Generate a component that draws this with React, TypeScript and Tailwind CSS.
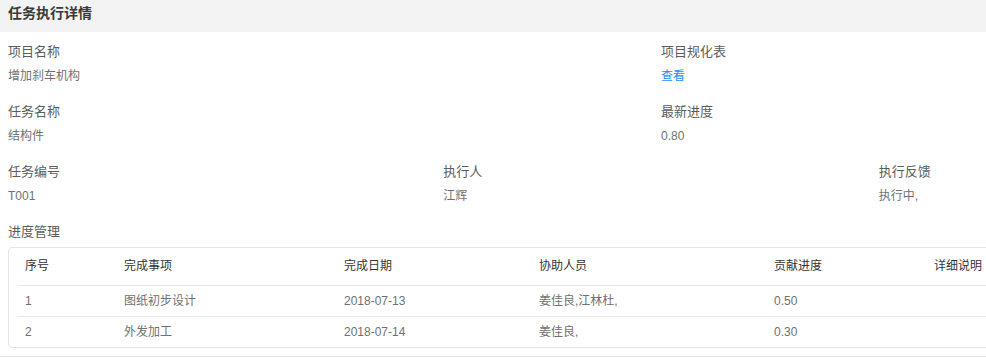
const fieldRows = [
  {
    cols: "grid-cols-2",
    items: [
      { label: "项目名称", value: "增加刹车机构" },
      { label: "项目规化表", value: "查看", link: true },
    ],
  },
  {
    cols: "grid-cols-2",
    items: [
      { label: "任务名称", value: "结构件" },
      { label: "最新进度", value: "0.80" },
    ],
  },
  {
    cols: "grid-cols-3",
    items: [
      { label: "任务编号", value: "T001" },
      { label: "执行人", value: "江辉" },
      { label: "执行反馈", value: "执行中," },
    ],
  },
]

const columns = [
  { title: "序号", w: "w-[99px]" },
  { title: "完成事项", w: "w-[220px]" },
  { title: "完成日期", w: "w-[195px]" },
  { title: "协助人员", w: "w-[235px]" },
  { title: "贡献进度", w: "w-[160px]" },
  { title: "详细说明", w: "" },
]

const records = [
  ["1", "图纸初步设计", "2018-07-13", "姜佳良,江林杜,", "0.50", ""],
  ["2", "外发加工", "2018-07-14", "姜佳良,", "0.30", ""],
]

export default function App() {
  return (
    <div className="h-[357px] w-[986px] overflow-hidden bg-white font-['Liberation_Sans','Noto_Sans_CJK_SC',sans-serif]">
      <div className="h-8 bg-[#f3f3f3] px-2 pt-[4px] text-[14px] font-bold leading-[18px] text-[#3a3a3a]">
        任务执行详情
      </div>
      <div className="w-[1306px] border-b border-[#e8e8e8] px-2 pb-2 pt-[10px]">
        {fieldRows.map((row, i) => (
          <div key={i} className={`grid ${row.cols} gap-x-4 pb-4`}>
            {row.items.map((f) => (
              <div key={f.label}>
                <div className="text-[13px] leading-5 text-[#5c5c5c]">{f.label}</div>
                <div
                  className={
                    f.link
                      ? "mt-1 text-[12px] leading-5 text-[#1890ff]"
                      : "mt-1 text-[12px] leading-5 text-[#707070]"
                  }
                >
                  {f.value}
                </div>
              </div>
            ))}
          </div>
        ))}
        <div className="text-[13px] leading-5 text-[#5c5c5c]">进度管理</div>
        <div className="mt-[5px] rounded border border-[#e5e5e5] px-2">
          <table className="w-full border-collapse text-left text-[12px]">
            <thead>
              <tr className="border-b border-[#e8e8e8]">
                {columns.map((c) => (
                  <th key={c.title} className={`${c.w} h-[37px] px-2 font-normal text-[#333]`}>
                    {c.title}
                  </th>
                ))}
              </tr>
            </thead>
            <tbody>
              {records.map((r, i) => (
                <tr key={i} className={i < records.length - 1 ? "border-b border-[#e8e8e8]" : ""}>
                  {r.map((cell, j) => (
                    <td key={j} className="h-[31px] px-2 text-[#707070]">
                      {cell}
                    </td>
                  ))}
                </tr>
              ))}
            </tbody>
          </table>
        </div>
      </div>
    </div>
  )
}
